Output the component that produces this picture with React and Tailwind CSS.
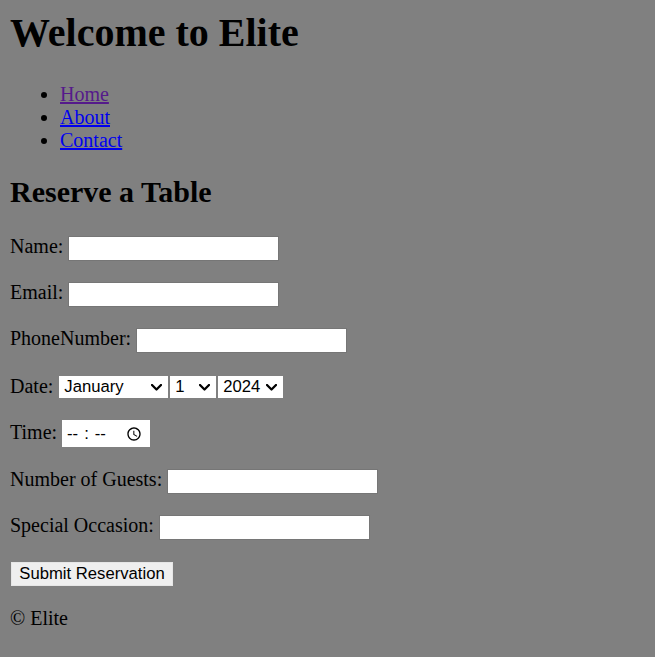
import React from "react";

const serif = "font-['Liberation_Serif',_'Times_New_Roman',_serif]";
const sans = "font-['Liberation_Sans',_Arial,_sans-serif]";

const textInput = `w-[211px] h-[25px] bg-white border border-[#767676] px-[2.5px] text-[16.67px] text-black ${sans}`;

function Select({ width, className = "", defaultValue, children }) {
  return (
    <div className={`relative flex h-[22px] ${className}`}>
      <select
        defaultValue={defaultValue}
        style={{ width }}
        className={`block appearance-none h-[22px] bg-white text-black text-[16.67px] leading-[22px] pl-[5px] pr-[20px] ${sans}`}
      >
        {children}
      </select>
      <svg
        className="pointer-events-none absolute right-[6px] top-[8px] w-[11px] h-[7px]"
        viewBox="0 0 11 7"
        fill="none"
      >
        <path d="M1 1 L5.5 5.5 L10 1" stroke="black" strokeWidth="2.3" strokeLinecap="round" strokeLinejoin="round" />
      </svg>
    </div>
  );
}

export default function App() {
  const months = [
    "January","February","March","April","May","June","July","August","September","October","November","December",
  ];
  return (
    <div className={`min-h-screen bg-[#808080] text-black text-[20px] leading-[23px] px-[10px] pt-[10px] pb-[10px] ${serif}`}>
      <header>
        <h1 className="text-[40px] font-bold leading-[46px] mb-[27px]">Welcome to Elite</h1>
        <nav>
          <ul className="list-disc pl-[50px] mb-[23px]">
            <li><a href="#" className="underline text-[#551a8b]">Home</a></li>
            <li><a href="#" className="underline text-[#0000ee]">About</a></li>
            <li><a href="#" className="underline text-[#0000ee]">Contact</a></li>
          </ul>
        </nav>
      </header>
      <main>
        <h2 className="text-[30px] font-bold leading-[34px] mb-[27px]">Reserve a Table</h2>
        <form onSubmit={(e) => e.preventDefault()} className="flex flex-col">
          <div className="flex items-center gap-[5px] h-[25px] mb-[21px]">
            <label className="pb-[4px]">Name:</label>
            <input type="text" className={textInput} />
          </div>
          <div className="flex items-center gap-[5px] h-[25px] mb-[21px]">
            <label className="pb-[4px]">Email:</label>
            <input type="email" className={textInput} />
          </div>
          <div className="flex items-center gap-[5px] h-[25px] mb-[23px]">
            <label className="pb-[4px]">PhoneNumber:</label>
            <input type="tel" className={textInput} />
          </div>
          <div className="flex items-center h-[22px] mb-[22px]">
            <label className="pb-[2px] mr-[5px]">Date:</label>
            <Select width={109} defaultValue="January" className="ml-[1px]">
              {months.map((m) => (
                <option key={m}>{m}</option>
              ))}
            </Select>
            <Select width={46} defaultValue="1" className="ml-[2px]">
              {Array.from({ length: 31 }, (_, i) => (
                <option key={i + 1}>{i + 1}</option>
              ))}
            </Select>
            <Select width={65} defaultValue="2024" className="ml-[2px]">
              <option>2024</option>
              <option>2025</option>
              <option>2026</option>
            </Select>
          </div>
          <div className="flex items-center gap-[5px] h-[27px] mb-[22px]">
            <label className="pb-[2px]">Time:</label>
            <input
              type="time"
              className={`w-[88px] h-[27px] bg-white text-black pl-[4px] pr-[5px] text-[16.67px] ${sans} [&::-webkit-datetime-edit-ampm-field]:hidden [&::-webkit-datetime-edit-hour-field]:pr-[2px] [&::-webkit-datetime-edit-minute-field]:pl-[2px] [&::-webkit-datetime-edit-text]:px-[4px] [&::-webkit-calendar-picker-indicator]:ml-[4px] [&::-webkit-calendar-picker-indicator]:w-[16px] [&::-webkit-calendar-picker-indicator]:h-[16px]`}
            />
          </div>
          <div className="flex items-center gap-[5px] h-[25px] mb-[21px]">
            <label className="pb-[4px]">Number of Guests:</label>
            <input type="number" className={textInput} />
          </div>
          <div className="flex items-center gap-[5px] h-[25px] mb-[22px]">
            <label className="pb-[4px]">Special Occasion:</label>
            <input type="text" className={textInput} />
          </div>
          <div className="flex items-center h-[24px] mb-[21px]">
            <button type="submit" className={`ml-[1px] w-[162px] h-[24px] bg-[#efefef] border border-[#e6e6e6] text-black text-[16.67px] leading-none ${sans}`}>
              Submit Reservation
            </button>
          </div>
        </form>
      </main>
      <footer>
        <p>© Elite</p>
      </footer>
    </div>
  );
}
